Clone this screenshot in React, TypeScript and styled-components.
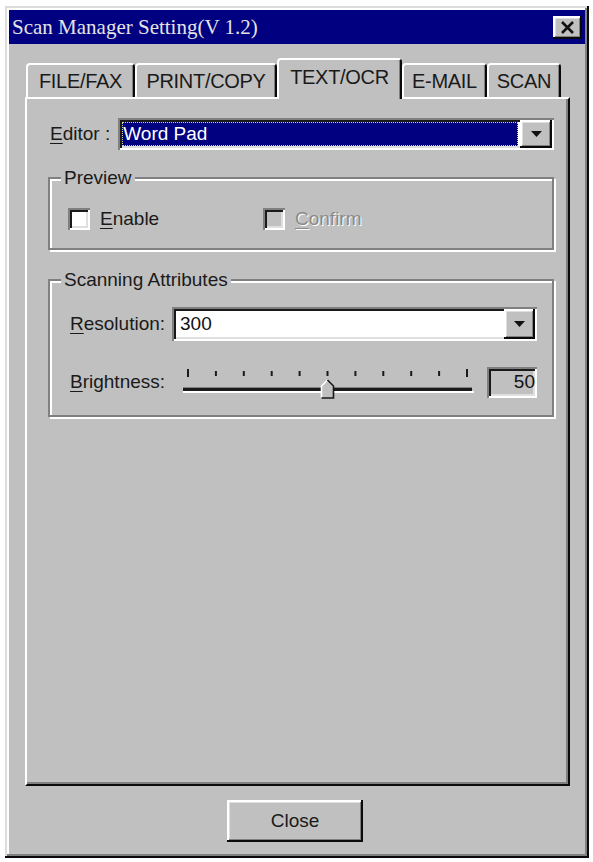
import React from "react";
import styled, { createGlobalStyle } from "styled-components";

const GlobalStyle = createGlobalStyle`
  html, body { margin: 0; padding: 0; background: #fff; }
  body { font-family: "Liberation Sans", Arial, sans-serif; color: #111; }
  * { box-sizing: border-box; }
`;

const Page = styled.div`
  width: 593px;
  height: 862px;
  padding: 6px 0 0 5px;
  background: #fff;
`;

const Window = styled.div`
  width: 584px;
  height: 852px;
  background: #c0c0c0;
  padding: 4px;
  display: flex;
  flex-direction: column;
  box-shadow: inset -2px -2px 0 #0a0a0a, inset 2px 2px 0 #dcdcdc,
    inset -4px -4px 0 #808080, inset 4px 4px 0 #fff;
`;

const TitleBar = styled.div`
  height: 34px;
  flex: none;
  background: #000080;
  display: flex;
  align-items: center;
  justify-content: space-between;
  padding: 0 3px;
`;

const TitleText = styled.span`
  font-family: "Liberation Serif", "Times New Roman", serif;
  font-size: 21px;
  color: #e4e4e4;
  white-space: nowrap;
`;

const raised = `
  box-shadow: inset -2px -2px 0 #0a0a0a, inset 2px 2px 0 #fff,
    inset -3px -3px 0 #808080, inset 3px 3px 0 #dfdfdf;
`;

const sunken = `
  box-shadow: inset 2px 2px 0 #808080, inset -2px -2px 0 #fff,
    inset 4px 4px 0 #1a1a1a, inset -4px -4px 0 #dfdfdf;
`;

const CloseBox = styled.div`
  width: 29px;
  height: 23px;
  background: #c0c0c0;
  display: flex;
  align-items: center;
  justify-content: center;
  ${raised}
`;

const TabRow = styled.div`
  height: 39px;
  flex: none;
  margin: 14px 15px 0 16px;
  padding-left: 1px;
  display: flex;
  align-items: flex-end;
`;

const Tab = styled.div<{ $w: number; $active?: boolean }>`
  width: ${(p) => p.$w}px;
  height: ${(p) => (p.$active ? 41 : 34)}px;
  margin-bottom: ${(p) => (p.$active ? -2 : 0)}px;
  position: relative;
  z-index: ${(p) => (p.$active ? 2 : 1)};
  background: #c0c0c0;
  border-top: 2px solid #fff;
  border-left: 2px solid #fff;
  border-right: 2px solid #0a0a0a;
  border-radius: 4px 4px 0 0;
  box-shadow: inset -1px 0 0 #808080;
  display: flex;
  align-items: center;
  justify-content: center;
  padding-bottom: ${(p) => (p.$active ? 5 : 0)}px;
  font-size: 20px;
  letter-spacing: -0.3px;
  color: #1a1a1a;
  white-space: nowrap;
`;

const Panel = styled.div`
  flex: 1;
  margin: 0 15px 0 16px;
  border-top: 2px solid #fff;
  border-left: 2px solid #fff;
  border-right: 2px solid #0a0a0a;
  border-bottom: 2px solid #0a0a0a;
  box-shadow: inset -2px -2px 0 #808080;
  padding: 19px 14px 0 21px;
  font-size: 19px;
`;

const EditorRow = styled.div`
  display: flex;
  align-items: center;
  gap: 8px;
  padding-left: 2px;
`;

const Label = styled.span<{ $disabled?: boolean }>`
  white-space: nowrap;
  color: ${(p) => (p.$disabled ? "#8a8a8a" : "#1a1a1a")};
  text-shadow: ${(p) => (p.$disabled ? "1px 1px 0 #fff" : "none")};
`;

const Key = styled.span`
  text-decoration: underline;
  text-underline-offset: 3px;
`;

const Combo = styled.div<{ $h: number }>`
  flex: 1;
  height: ${(p) => p.$h}px;
  background: #fff;
  padding: 2px;
  display: flex;
  ${sunken}
`;

const Selection = styled.div`
  flex: 1;
  margin: 2px;
  background: #000080;
  color: #fff;
  outline: 1px dotted #d8d890;
  outline-offset: -1px;
  display: flex;
  align-items: center;
  padding-left: 1px;
`;

const ComboValue = styled.div`
  flex: 1;
  display: flex;
  align-items: center;
  padding-left: 6px;
`;

const DropButton = styled.div<{ $w: number }>`
  width: ${(p) => p.$w}px;
  flex: none;
  background: #c0c0c0;
  display: flex;
  align-items: center;
  justify-content: center;
  ${raised}
`;

const Group = styled.div<{ $top: number }>`
  position: relative;
  margin-top: ${(p) => p.$top}px;
  border: 2px solid #808080;
  box-shadow: inset 2px 2px 0 #fff, 2px 2px 0 #fff;
`;

const GroupTitle = styled.span`
  position: absolute;
  top: -12px;
  left: 11px;
  padding: 0 3px;
  line-height: 22px;
  background: #c0c0c0;
  color: #1a1a1a;
`;

const CheckRow = styled.div`
  display: flex;
  align-items: center;
  height: 26px;
  margin: 27px 0 16px 18px;
`;

const CheckItem = styled.label<{ $w?: number }>`
  display: flex;
  align-items: center;
  gap: 10px;
  width: ${(p) => (p.$w ? `${p.$w}px` : "auto")};
`;

const CheckBox = styled.span<{ $bg: string }>`
  width: 22px;
  height: 22px;
  background: ${(p) => p.$bg};
  ${sunken}
`;

const AttrGrid = styled.div`
  display: grid;
  grid-template-columns: 102px 1fr;
  row-gap: 24px;
  align-items: center;
  padding: 26px 15px 16px 20px;
`;

const ResCombo = styled(Combo)`
  padding: 2px;
`;

const BrightCell = styled.div`
  display: flex;
  align-items: center;
  height: 34px;
  padding-left: 6px;
  gap: 9px;
`;

const ValueBox = styled.div`
  width: 50px;
  height: 31px;
  background: #c0c0c0;
  display: flex;
  align-items: center;
  justify-content: flex-end;
  padding-right: 2px;
  ${sunken}
`;

const Footer = styled.div`
  height: 68px;
  flex: none;
  display: flex;
  justify-content: center;
  padding: 14px 4px 0 0;
`;

const Button = styled.div`
  width: 136px;
  height: 42px;
  background: #c0c0c0;
  display: flex;
  align-items: center;
  justify-content: center;
  font-size: 19px;
  color: #1a1a1a;
  ${raised}
`;

const Arrow = () => (
  <svg width="11" height="6" viewBox="0 0 11 6">
    <polygon points="0,0 11,0 5.5,6" fill="#111" />
  </svg>
);

const XGlyph = () => (
  <svg width="15" height="13" viewBox="0 0 15 13">
    <path d="M2 1 L13 12 M13 1 L2 12" stroke="#111" strokeWidth="2.6" />
  </svg>
);

const Slider = ({ value }: { value: number }) => {
  const ticks = Array.from({ length: 11 }, (_, i) => i);
  const x0 = 10;
  const step = 27.9;
  const tx = x0 + (value / 100) * step * 10;
  return (
    <svg width="300" height="34" viewBox="0 0 300 34">
      {ticks.map((i) => {
        const x = x0 + i * step;
        const tall = i === 0 || i === 10;
        return (
          <rect
            key={i}
            x={x - 1}
            y={tall ? 4 : 6}
            width={2}
            height={tall ? 8 : 5}
            fill="#1a1a1a"
          />
        );
      })}
      <rect x="5" y="22" width="289" height="1" fill="#808080" />
      <rect x="5" y="23" width="289" height="3" fill="#1a1a1a" />
      <rect x="5" y="26" width="291" height="2" fill="#fff" />
      <polygon
        points={`${tx},15 ${tx + 6},21 ${tx + 6},33 ${tx - 6},33 ${tx - 6},21`}
        fill="#c0c0c0"
      />
      <polyline
        points={`${tx - 6},33 ${tx - 6},21 ${tx},15`}
        fill="none"
        stroke="#fff"
        strokeWidth="1.6"
      />
      <polyline
        points={`${tx},15 ${tx + 6},21 ${tx + 6},33 ${tx - 6},33`}
        fill="none"
        stroke="#1a1a1a"
        strokeWidth="1.6"
      />
    </svg>
  );
};

const tabs = [
  { label: "FILE/FAX", w: 109 },
  { label: "PRINT/COPY", w: 142 },
  { label: "TEXT/OCR", w: 125, active: true },
  { label: "E-MAIL", w: 85 },
  { label: "SCAN", w: 74 },
];

export default function App() {
  return (
    <Page>
      <GlobalStyle />
      <Window>
        <TitleBar>
          <TitleText>Scan Manager Setting(V 1.2)</TitleText>
          <CloseBox>
            <XGlyph />
          </CloseBox>
        </TitleBar>
        <TabRow>
          {tabs.map((t) => (
            <Tab key={t.label} $w={t.w} $active={t.active}>
              {t.label}
            </Tab>
          ))}
        </TabRow>
        <Panel>
          <EditorRow>
            <Label>
              <Key>E</Key>ditor :
            </Label>
            <Combo $h={32}>
              <Selection>Word Pad</Selection>
              <DropButton $w={32}>
                <Arrow />
              </DropButton>
            </Combo>
          </EditorRow>

          <Group $top={27}>
            <GroupTitle>Preview</GroupTitle>
            <CheckRow>
              <CheckItem $w={195}>
                <CheckBox $bg="#fff" />
                <Label>
                  <Key>E</Key>nable
                </Label>
              </CheckItem>
              <CheckItem>
                <CheckBox $bg="#c0c0c0" />
                <Label $disabled>
                  <Key>C</Key>onfirm
                </Label>
              </CheckItem>
            </CheckRow>
          </Group>

          <Group $top={29}>
            <GroupTitle>Scanning Attributes</GroupTitle>
            <AttrGrid>
              <Label>
                <Key>R</Key>esolution:
              </Label>
              <ResCombo $h={34}>
                <ComboValue>300</ComboValue>
                <DropButton $w={31}>
                  <Arrow />
                </DropButton>
              </ResCombo>
              <Label>
                <Key>B</Key>rightness:
              </Label>
              <BrightCell>
                <Slider value={50} />
                <ValueBox>50</ValueBox>
              </BrightCell>
            </AttrGrid>
          </Group>
        </Panel>
        <Footer>
          <Button>Close</Button>
        </Footer>
      </Window>
    </Page>
  );
}
